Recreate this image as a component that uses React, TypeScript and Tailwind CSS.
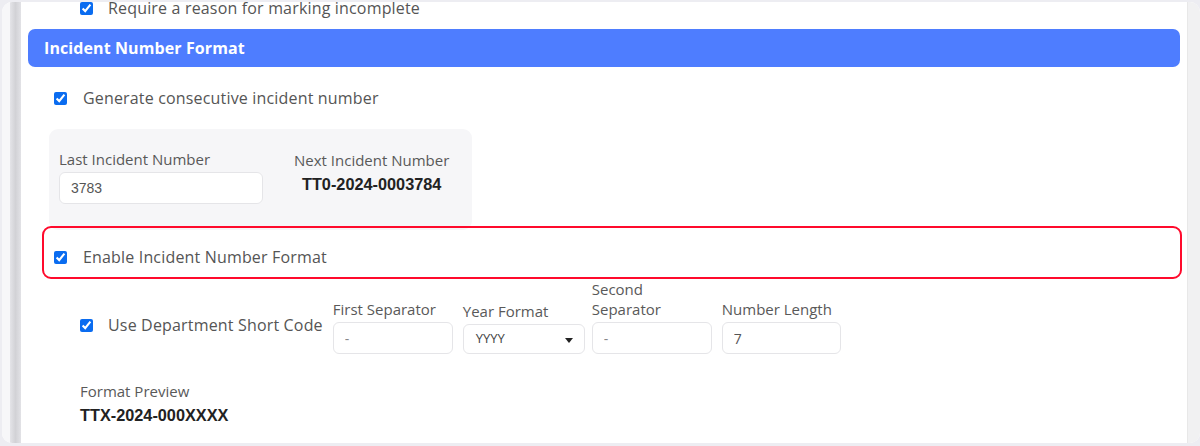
import React from 'react';

const label = "text-[15px] leading-[20px] text-[#595959]";
const body = "text-[16px] tracking-[0.17px] text-[#555]";
const input =
  "h-[32px] w-full rounded-[6px] border border-[#e5e5e8] bg-white px-[11px] text-[14px] text-[#555] outline-none";

function Check({ className = "" }: { className?: string }) {
  return (
    <input
      type="checkbox"
      defaultChecked
      readOnly
      className={`h-[13px] w-[13px] shrink-0 accent-[#0a6cf0] ${className}`}
    />
  );
}

export default function App() {
  return (
    <div
      className="h-[446px] w-[1200px] overflow-hidden bg-[#ededf2] pt-[2px] pb-[3px] pl-[2px]"
      style={{ fontFamily: '"Open Sans", "Liberation Sans", sans-serif' }}
    >
      <div className="flex h-full overflow-hidden rounded-[10px] bg-white">
        {/* left gutter + rail */}
        <div className="w-[8px] shrink-0 bg-[#f7f7f9]" />
        <div className="w-[11px] shrink-0 bg-gradient-to-r from-[#e4e4e8] via-[#d2d2d6] to-[#e2e2e6]" />

        {/* content */}
        <div className="flex min-w-0 flex-1 flex-col px-[7px]">
          <div className="mt-[-6px] flex h-[24px] items-center pl-[52px]">
            <Check />
            <span className={`ml-[15px] ${body}`}>Require a reason for marking incomplete</span>
          </div>

          <div className="mt-[9px] flex h-[38px] items-center rounded-[7px] bg-[#4e7dff] pl-[16px]">
            <span className="text-[16px] font-bold tracking-[0.1px] text-white">Incident Number Format</span>
          </div>

          <div className="mt-[19px] flex h-[24px] items-center pl-[26px]">
            <Check />
            <span className={`ml-[16px] ${body}`}>Generate consecutive incident number</span>
          </div>

          <div className="ml-[21px] mt-[19px] flex h-[101px] w-[423px] rounded-[9px] bg-[#f6f6f8] pl-[10px] pt-[20px]">
            <div className="flex w-[204px] flex-col">
              <span className={label}>Last Incident Number</span>
              <input className={`${input} mt-[3px]`} defaultValue="3783" style={{ fontFamily: '"Liberation Sans", Arial, sans-serif' }} />
            </div>
            <div className="ml-[31px] flex flex-col items-center">
              <span className={`${label} mt-[1px]`}>Next Incident Number</span>
              <span
                className="mt-[4px] text-[16.3px] font-bold leading-[20px] text-[#222]"
                style={{ fontFamily: '"Liberation Sans", Arial, sans-serif' }}
              >
                TT0-2024-0003784
              </span>
            </div>
          </div>

          <div className="relative mt-[15px] flex h-[24px] items-center pl-[26px]">
            <div className="pointer-events-none absolute bottom-[-10px] left-[14px] right-[-2px] top-[-19px] rounded-[9px] border-2 border-[#ff0a2c]" />
            <Check />
            <span className={`ml-[16px] ${body}`}>Enable Incident Number Format</span>
          </div>

          <div className="mt-[10px] flex items-end pl-[52px]">
            <div className="mb-[17px] flex h-[24px] items-center">
              <Check />
              <span className={`ml-[15px] ${body}`}>Use Department Short Code</span>
            </div>
            <div className="ml-[10px] flex w-[120px] flex-col">
              <span className={label}>First Separator</span>
              <input className={`${input} mt-[3px] text-[#888]`} defaultValue="-" />
            </div>
            <div className="ml-[10px] flex w-[122px] flex-col">
              <span className={label}>Year Format</span>
              <div className="relative mt-[3px] flex h-[30px] items-center rounded-[6px] border border-[#e5e5e8] bg-white pl-[12px]">
                <span className="text-[13px] text-[#444]">YYYY</span>
                <svg className="absolute right-[11px] top-[13px]" width="8" height="5" viewBox="0 0 8 5">
                  <path d="M0 0h8L4 5z" fill="#222" />
                </svg>
              </div>
            </div>
            <div className="ml-[7px] flex w-[120px] flex-col">
              <span className={label}>
                Second
                <br />
                Separator
              </span>
              <input className={`${input} mt-[3px] text-[#888]`} defaultValue="-" />
            </div>
            <div className="ml-[10px] flex w-[119px] flex-col">
              <span className={label}>Number Length</span>
              <input className={`${input} mt-[3px]`} defaultValue="7" />
            </div>
          </div>

          <div className="mt-[27px] flex flex-col pl-[52px]">
            <span className={label}>Format Preview</span>
            <span
              className="mt-[2px] text-[16.3px] font-bold leading-[24px] text-[#222]"
              style={{ fontFamily: '"Liberation Sans", Arial, sans-serif' }}
            >
              TTX-2024-000XXXX
            </span>
          </div>
        </div>

        {/* right scroll track */}
        <div className="w-[13px] shrink-0 border-l border-[#e8e8e8] bg-[#f1f1f2]" />
      </div>
    </div>
  );
}
